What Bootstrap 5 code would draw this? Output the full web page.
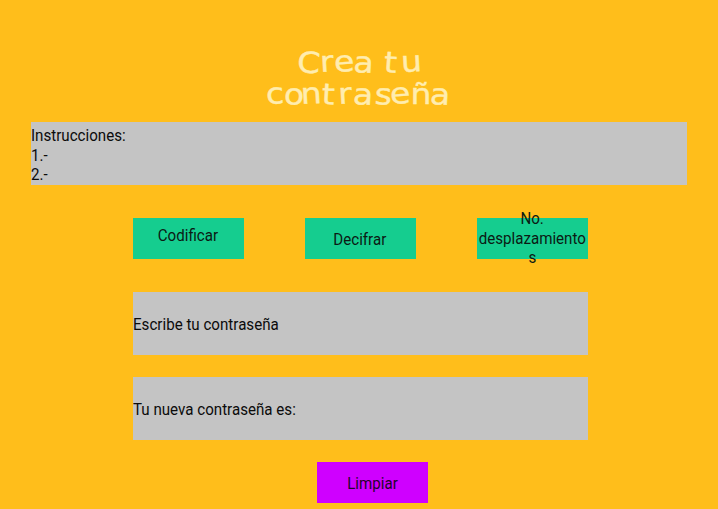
<!DOCTYPE html>
<html lang="es">
<head>
<meta charset="utf-8">
<meta name="viewport" content="width=device-width, initial-scale=1">
<title>Crea tu contraseña</title>
<link href="https://cdn.jsdelivr.net/npm/bootstrap@5.3.0/dist/css/bootstrap.min.css" rel="stylesheet">
<style>
body{background:#ffbe1b;color:#0b0b0b;font:17px/19.6px Roboto,"Open Sans",sans-serif;height:509px;overflow:hidden}
.page{padding:46px 31px 0}
.heading{font:29px/32px "DejaVu Sans",sans-serif;color:#ffedb0;height:64px;margin:0 0 12px}
.heading svg{display:block;width:200px;height:64px;fill:currentColor;stroke:currentColor;stroke-width:.4;stroke-linejoin:miter;overflow:visible}
.narrow{display:inline-block;white-space:nowrap;transform:scaleX(.89);transform-origin:0 50%}
.btn .narrow{transform-origin:50% 50%}
.panel{background:#c4c4c4}
.intro{height:63px;padding-top:4px;margin-bottom:33px}
.tool-area{width:455px;margin-left:101.5px}
.action{--bs-btn-color:#0b1a14;--bs-btn-bg:#15cd8f;--bs-btn-hover-bg:#12b981;--bs-btn-border-width:0;--bs-btn-border-radius:0;--bs-btn-padding-x:0;--bs-btn-padding-y:0;width:111px;height:41px;font:inherit}
.raised{padding-bottom:6px}
.lowered{padding-top:2px}
.clear{--bs-btn-color:#24042b;--bs-btn-bg:#cf00ff;--bs-btn-hover-bg:#b900e4;margin:22px 0 0 184.5px;padding-top:2px}
.field{height:63px;padding-top:2px}
.entry{margin-top:33px}
.result{margin-top:22px}
</style>
</head>
<body>
<main class="page">
<h1 class="heading d-flex justify-content-center"><svg viewBox="0 0 200 64" role="img"><g transform="scale(1.14 1)"><text y="26" x="33 54 66.5 82.5 98 109 125" rotate="4 -3 -4 3 0 4 -3">Crea tu</text><text y="58" x="6.5 21.5 37 54.5 70 82 101 115.5 133 149.5" rotate="-3 3 -3 3 -3 3 3 -4 0 3">contraseña</text></g></svg></h1>
<section class="panel intro d-flex flex-column align-items-start"><span class="narrow">Instrucciones:</span><span class="narrow">1.-</span><span class="narrow">2.-</span></section>
<section class="tool-area">
<div class="d-flex justify-content-between">
<button class="btn action raised d-flex align-items-center justify-content-center"><span class="narrow">Codificar</span></button>
<button class="btn action lowered d-flex align-items-center justify-content-center"><span class="narrow">Decifrar</span></button>
<button class="btn action d-flex flex-column align-items-center justify-content-center"><span class="narrow">No.</span><span class="narrow">desplazamiento</span><span class="narrow">s</span></button>
</div>
<div class="panel field entry d-flex align-items-center"><span class="narrow">Escribe tu contraseña</span></div>
<div class="panel field result d-flex align-items-center"><span class="narrow">Tu nueva contraseña es:</span></div>
<button class="btn action clear d-flex align-items-center justify-content-center"><span class="narrow">Limpiar</span></button>
</section>
</main>
<script src="https://cdn.jsdelivr.net/npm/bootstrap@5.3.0/dist/js/bootstrap.bundle.min.js"></script>
</body>
</html>
